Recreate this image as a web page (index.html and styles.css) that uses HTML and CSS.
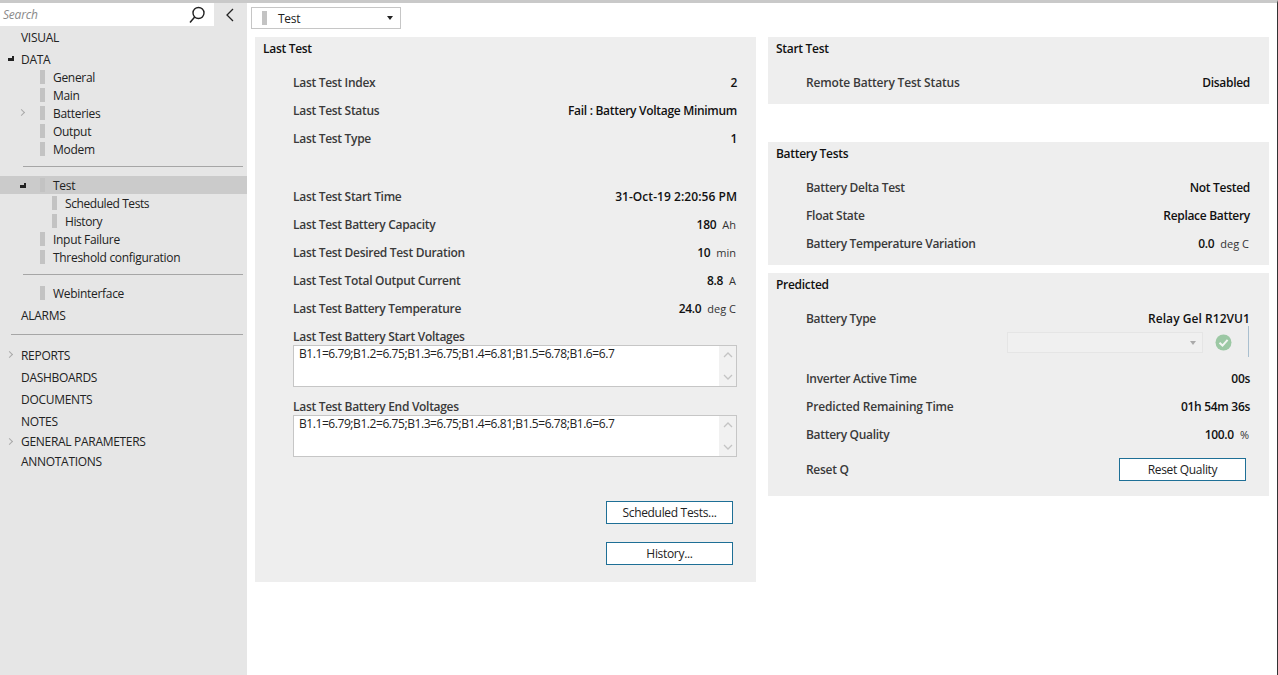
FILE: index.html
```html
<!DOCTYPE html>
<html lang="en">
<head>
    <meta charset="UTF-8">
    <meta name="viewport" content="width=device-width, initial-scale=1.0">
    <title>Test</title>
    <link rel="stylesheet" href="styles.css">
</head>
<body>
<div class="app">
  <aside class="sidebar">
    <div class="search-row">
      <div class="search-box">
        <span class="search-text">Search</span>
        <svg class="search-icon" width="18" height="18" viewBox="0 0 18 18"><circle cx="10.5" cy="7" r="5.5" fill="none" stroke="#222" stroke-width="1.4"/><path d="M6.7 11 L2 16.5" stroke="#222" stroke-width="1.5" fill="none"/></svg>
      </div>
      <svg class="collapse-icon" width="10" height="14" viewBox="0 0 10 14"><path d="M8 1 L2 7 L8 13" fill="none" stroke="#222" stroke-width="1.3"/></svg>
    </div>

    <nav class="tree">
      <div class="top first">VISUAL</div>
      <div class="top open-root"><span class="arrow-open root"></span>DATA</div>
      <div class="item"><i class="tick"></i>General</div>
      <div class="item"><i class="tick"></i>Main</div>
      <div class="item"><span class="arrow-closed lvl1"></span><i class="tick"></i>Batteries</div>
      <div class="item"><i class="tick"></i>Output</div>
      <div class="item"><i class="tick"></i>Modem</div>
      <hr class="rule short">
      <div class="item selected"><span class="arrow-open lvl1"></span><i class="tick"></i>Test</div>
      <div class="item sub"><i class="tick"></i>Scheduled Tests</div>
      <div class="item sub"><i class="tick"></i>History</div>
      <div class="item"><i class="tick"></i>Input Failure</div>
      <div class="item"><i class="tick"></i>Threshold configuration</div>
      <hr class="rule short">
      <div class="item"><i class="tick"></i>Webinterface</div>
      <div class="top alarms">ALARMS</div>
      <hr class="rule long">
      <div class="top"><span class="arrow-closed root"></span>REPORTS</div>
      <div class="top">DASHBOARDS</div>
      <div class="top">DOCUMENTS</div>
      <div class="top">NOTES</div>
      <div class="top tight pull"><span class="arrow-closed root"></span>GENERAL PARAMETERS</div>
      <div class="top tight">ANNOTATIONS</div>
    </nav>
  </aside>

  <main class="content">
    <div class="page-select">
      <i class="tick"></i>
      <span class="page-select-text">Test</span>
      <span class="caret"></span>
    </div>

    <div class="columns">
      <section class="panel last-test">
        <h2>Last Test</h2>
        <div class="rows">
          <div class="row"><span>Last Test Index</span><b>2</b></div>
          <div class="row"><span>Last Test Status</span><b>Fail : Battery Voltage Minimum</b></div>
          <div class="row"><span>Last Test Type</span><b>1</b></div>
          <div class="row spaced"><span>Last Test Start Time</span><b class="wide">31-Oct-19 2:20:56 PM</b></div>
          <div class="row"><span>Last Test Battery Capacity</span><b>180<em>Ah</em></b></div>
          <div class="row"><span>Last Test Desired Test Duration</span><b>10<em>min</em></b></div>
          <div class="row"><span>Last Test Total Output Current</span><b>8.8<em>A</em></b></div>
          <div class="row"><span>Last Test Battery Temperature</span><b>24.0<em>deg C</em></b></div>

          <label class="area-label">Last Test Battery Start Voltages</label>
          <div class="area">
            <span>B1.1=6.79;B1.2=6.75;B1.3=6.75;B1.4=6.81;B1.5=6.78;B1.6=6.7</span>
            <div class="area-scroll">
              <svg width="10" height="6" viewBox="0 0 10 6"><path d="M1 5 L5 1 L9 5" fill="none" stroke="#c4c4c4" stroke-width="1.3"/></svg>
              <svg width="10" height="6" viewBox="0 0 10 6"><path d="M1 1 L5 5 L9 1" fill="none" stroke="#c4c4c4" stroke-width="1.3"/></svg>
            </div>
          </div>

          <label class="area-label">Last Test Battery End Voltages</label>
          <div class="area">
            <span>B1.1=6.79;B1.2=6.75;B1.3=6.75;B1.4=6.81;B1.5=6.78;B1.6=6.7</span>
            <div class="area-scroll">
              <svg width="10" height="6" viewBox="0 0 10 6"><path d="M1 5 L5 1 L9 5" fill="none" stroke="#c4c4c4" stroke-width="1.3"/></svg>
              <svg width="10" height="6" viewBox="0 0 10 6"><path d="M1 1 L5 5 L9 1" fill="none" stroke="#c4c4c4" stroke-width="1.3"/></svg>
            </div>
          </div>
        </div>
        <div class="actions">
          <button type="button">Scheduled Tests...</button>
          <button type="button">History...</button>
        </div>
      </section>

      <div class="right">
        <section class="panel start-test">
          <h2>Start Test</h2>
          <div class="rows">
            <div class="row"><span class="loose">Remote Battery Test Status</span><b>Disabled</b></div>
          </div>
        </section>

        <section class="panel battery-tests">
          <h2>Battery Tests</h2>
          <div class="rows">
            <div class="row"><span>Battery Delta Test</span><b>Not Tested</b></div>
            <div class="row"><span>Float State</span><b>Replace Battery</b></div>
            <div class="row"><span>Battery Temperature Variation</span><b>0.0<em>deg C</em></b></div>
          </div>
        </section>

        <section class="panel predicted">
          <h2>Predicted</h2>
          <div class="rows">
            <div class="row"><span>Battery Type</span><b class="wide">Relay Gel R12VU1</b></div>
            <div class="type-edit">
              <div class="type-select"><span class="caret small"></span></div>
              <svg class="ok-icon" width="17" height="17" viewBox="0 0 17 17"><circle cx="8.5" cy="8.5" r="8" fill="#9cc8a4"/><path d="M4.5 8.8 L7.5 11.6 L12.6 5.8" fill="none" stroke="#f2f5f2" stroke-width="2"/></svg>
              <i class="type-line"></i>
            </div>
            <div class="row"><span>Inverter Active Time</span><b>00s</b></div>
            <div class="row"><span class="loose">Predicted Remaining Time</span><b>01h 54m 36s</b></div>
            <div class="row"><span>Battery Quality</span><b>100.0<em>%</em></b></div>
            <div class="row reset"><span>Reset Q</span><button type="button">Reset Quality</button></div>
          </div>
        </section>
      </div>
    </div>
  </main>
</div>
</body>
</html>
```

FILE: styles.css
```css
html, body {
    margin: 0;
    padding: 0;
    height: 100%;
    overflow: hidden;
}

body {
    font-family: 'Open Sans', 'Noto Sans', sans-serif;
    font-size: 12px;
    color: #222;
    background: #fff;
}

.app {
    display: flex;
    height: 675px;
    box-sizing: border-box;
    border-top: 3px solid #c9c9c9;
    border-right: 1px solid #333;
}

/* sidebar */
.sidebar {
    width: 247px;
    flex: none;
    background: #e6e6e6;
}

.search-row {
    display: flex;
    align-items: center;
    height: 23px;
}

.search-box {
    width: 214px;
    height: 23px;
    background: #fff;
    display: flex;
    align-items: center;
    justify-content: space-between;
    padding: 0 8px 0 3px;
    box-sizing: border-box;
}

.search-text {
    font-style: italic;
    color: #8a8a8a;
    letter-spacing: -0.2px;
}

.collapse-icon {
    margin-left: 11px;
}

.tree {
    padding-top: 3px;
}

.top, .item {
    position: relative;
    display: flex;
    align-items: center;
    letter-spacing: -0.3px;
}

.item.sub {
    letter-spacing: -0.42px;
}

.top {
    height: 22px;
    padding-left: 21px;
}

.top.first {
    height: 16px;
    margin-bottom: 2px;
}

.top.open-root {
    height: 24px;
    margin-bottom: -3px;
}

.top.tight {
    height: 20px;
}

.top.pull {
    margin-top: -1px;
}

.top.alarms {
    margin-top: 2px;
}

.item {
    height: 18px;
    padding-left: 40px;
}

.item.sub {
    padding-left: 52px;
}

.item.selected {
    background: #cbcbcb;
}

.tick {
    display: inline-block;
    width: 5px;
    height: 14px;
    background: #c3c3c3;
    margin-right: 8px;
    flex: none;
}

.rule {
    border: 0;
    border-top: 1px solid #a6a6a6;
    margin: 8px 4px 9px 0;
}

.rule.short {
    margin-left: 23px;
}

.rule.long {
    margin: 8px 4px 9px 11px;
}

.arrow-open {
    position: absolute;
    top: 7px;
    width: 6px;
    height: 5px;
    background: #222;
    clip-path: polygon(67% 0, 100% 0, 100% 100%, 0 100%, 0 40%, 67% 40%);
}

.arrow-open.root { left: 8px; top: 9px; }
.arrow-open.lvl1 { left: 20px; }

.arrow-closed {
    position: absolute;
    width: 4px;
    height: 4px;
    border-top: 1.5px solid #aaa;
    border-right: 1.5px solid #aaa;
    transform: rotate(45deg);
}

.arrow-closed.root { left: 7px; top: 8px; }
.arrow-closed.lvl1 { left: 19px; top: 6px; }

/* content */
.content {
    flex: 1;
    min-width: 0;
}

.page-select {
    width: 150px;
    height: 22px;
    margin: 4px 0 0 4px;
    box-sizing: border-box;
    border: 1px solid #c6c6c6;
    display: flex;
    align-items: center;
    padding-left: 10px;
    position: relative;
}

.page-select .tick {
    margin-right: 11px;
}

.page-select-text {
    letter-spacing: -0.25px;
}

.caret {
    position: absolute;
    right: 7px;
    top: 8px;
    width: 0;
    height: 0;
    border-left: 3.5px solid transparent;
    border-right: 3.5px solid transparent;
    border-top: 4px solid #222;
}

.columns {
    display: flex;
    gap: 12px;
    margin: 8px 0 0 8px;
}

.right {
    width: 501px;
    display: flex;
    flex-direction: column;
}

.panel {
    background: #eeeeee;
    box-sizing: border-box;
}

.panel h2 {
    margin: 0;
    font-size: 12px;
    line-height: 24px;
    font-weight: 600;
    color: #111;
    padding-left: 8px;
    letter-spacing: -0.3px;
}

.last-test {
    width: 501px;
    height: 545px;
}

.start-test { height: 67px; }
.battery-tests { height: 123px; margin-top: 38px; }
.predicted { height: 223px; margin-top: 8px; }

.rows {
    padding: 7px 19px 0 38px;
}

.row {
    display: flex;
    justify-content: space-between;
    align-items: center;
    height: 28px;
    font-weight: 600;
    color: #3a3a3a;
    letter-spacing: -0.3px;
}

.row .loose {
    letter-spacing: -0.17px;
}

.row b {
    font-weight: 600;
    color: #111;
}

.row b.wide {
    letter-spacing: 0.05px;
}

.row em {
    font-style: normal;
    font-weight: 400;
    font-size: 11px;
    color: #333;
    margin-left: 6px;
    margin-right: 1px;
    letter-spacing: 0;
}

.row.spaced {
    margin-top: 30px;
}

.area-label {
    display: block;
    height: 15px;
    line-height: 14px;
    font-weight: 600;
    color: #3a3a3a;
    letter-spacing: -0.3px;
    margin-top: 8px;
}

.area {
    height: 42px;
    box-sizing: border-box;
    background: #fff;
    border: 1px solid #c6c6c6;
    padding: 1px 0 0 5px;
    display: flex;
    justify-content: space-between;
    line-height: 14px;
    letter-spacing: -0.43px;
    margin-bottom: 13px;
}

.area-scroll {
    width: 17px;
    background: #f1f1f1;
    margin-top: -1px;
    display: flex;
    flex-direction: column;
    justify-content: space-between;
    align-items: center;
    padding: 6px 0;
    box-sizing: border-box;
}

.actions {
    display: flex;
    flex-direction: column;
    align-items: flex-end;
    gap: 18px;
    padding: 31px 23px 0 0;
}

button {
    font-family: inherit;
    font-size: 12px;
    letter-spacing: -0.32px;
    color: #222;
    background: #fff;
    border: 1px solid #1e6f96;
    width: 127px;
    height: 23px;
    padding: 0;
}

.type-edit {
    display: flex;
    align-items: flex-start;
    height: 32px;
    padding-left: 201px;
    position: relative;
}

.type-select {
    width: 196px;
    height: 21px;
    box-sizing: border-box;
    background: #f0f0f0;
    border: 1px solid #e5e5e5;
    position: relative;
}

.caret.small {
    border-top-color: #aaa;
    top: 8px;
    right: 6px;
}

.ok-icon {
    margin: 2px 0 0 12px;
}

.type-line {
    position: absolute;
    right: 1px;
    top: -6px;
    width: 1px;
    height: 31px;
    background: #a9bfcf;
}

.row.reset {
    margin-top: 7px;
}

.row.reset button {
    margin-right: 4px;
    color: #222;
    font-weight: 400;
}
```
